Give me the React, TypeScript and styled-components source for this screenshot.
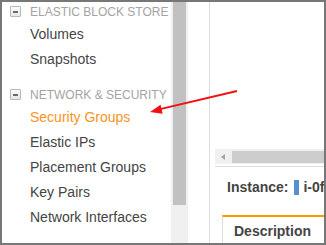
import React from 'react';
import styled, {createGlobalStyle} from 'styled-components';

const GlobalStyle = createGlobalStyle`
	html, body {
		margin: 0;
		padding: 0;
		background: #ffffff;
	}
	body {
		font-family: 'Liberation Sans', Arial, sans-serif;
	}
`;

const data = {
	sections: [
		{title: 'ELASTIC BLOCK STORE', items: ['Volumes', 'Snapshots']},
		{
			title: 'NETWORK & SECURITY',
			items: [
				'Security Groups',
				'Elastic IPs',
				'Placement Groups',
				'Key Pairs',
				'Network Interfaces',
			],
		},
	],
	active: 'Security Groups',
};

function MinusBox() {
	return (
		<_Minus>
			<span />
		</_Minus>
	);
}

function Arrow() {
	return (
		<_ArrowSvg width="326" height="245" viewBox="0 0 326 245">
			<line x1="237" y1="91" x2="158" y2="109.6" stroke="#f21010" strokeWidth="2" />
			<polygon points="150,112 162.6,113.8 160.6,104.8" fill="#f21010" />
		</_ArrowSvg>
	);
}

export default function App() {
	return (
		<>
			<GlobalStyle />
			<Frame>
				<Sidebar>
					{data.sections.map((s, i) => (
						<Section key={i} first={i === 0}>
							<Header>
								<MinusBox />
								<span>{s.title}</span>
							</Header>
							{s.items.map((item) => (
								<Item key={item} active={item === data.active}>
									{item}
								</Item>
							))}
						</Section>
					))}
				</Sidebar>
				<VTrack>
					<VThumb />
				</VTrack>
				<Gutter />
				<Content>
					<TableArea />
					<HScroll>
						<LeftArrow />
						<HThumb />
					</HScroll>
					<Divider />
					<InstanceRow>
						<Label>Instance:</Label>
						<StateMark />
						<InstanceId>i-0f3a9c27b81d4e562</InstanceId>
					</InstanceRow>
					<Tab>
						<TabTitle>Description</TabTitle>
					</Tab>
				</Content>
				<Arrow />
			</Frame>
		</>
	);
}

const Frame = styled.div`
	position: relative;
	display: flex;
	width: 326px;
	height: 245px;
	box-sizing: border-box;
	border: 2px solid #777777;
	overflow: hidden;
	background: #ffffff;
`;

const Sidebar = styled.div`
	width: 169px;
	flex-shrink: 0;
	display: flex;
	flex-direction: column;
`;

const Section = styled.div<{first: boolean}>`
	display: flex;
	flex-direction: column;
	margin-top: ${(p) => (p.first ? '0' : '13px')};
`;

const Header = styled.div`
	display: flex;
	align-items: center;
	gap: 9px;
	padding-left: 8px;
	height: 20px;
	line-height: 19px;
	font-size: 12px;
	color: #a3a3a3;
	white-space: nowrap;
`;

const _Minus = styled.div`
	width: 11px;
	height: 11px;
	box-sizing: border-box;
	border: 1px solid #b8b8b8;
	border-radius: 1px;
	background: linear-gradient(#fbfbfb, #e6e6e6);
	display: flex;
	align-items: center;
	justify-content: center;
	margin-bottom: 1px;

	span {
		width: 5px;
		height: 2px;
		background: #6a6a6a;
	}
`;

const Item = styled.div<{active: boolean}>`
	padding-left: 28px;
	height: 25px;
	line-height: 25px;
	font-size: 14px;
	color: ${(p) => (p.active ? '#f7941e' : '#444444')};
	white-space: nowrap;
`;

const VTrack = styled.div`
	width: 17px;
	flex-shrink: 0;
	background: #f0f0f0;
	padding-left: 2px;
	box-sizing: border-box;
`;

const VThumb = styled.div`
	width: 13px;
	height: 203px;
	background: #c1c1c1;
`;

const Gutter = styled.div`
	width: 21px;
	flex-shrink: 0;
`;

const Content = styled.div`
	flex: 1;
	min-width: 0;
	border-left: 1px solid #dddddd;
	display: flex;
	flex-direction: column;
`;

const TableArea = styled.div`
	height: 147px;
	flex-shrink: 0;
`;

const HScroll = styled.div`
	margin-left: 5px;
	height: 15px;
	flex-shrink: 0;
	background: #f0f0f0;
	display: flex;
	align-items: center;
`;

const LeftArrow = styled.div`
	width: 0;
	height: 0;
	margin-left: 6px;
	border-top: 3px solid transparent;
	border-bottom: 3px solid transparent;
	border-right: 4px solid #a3a3a3;
`;

const HThumb = styled.div`
	flex: 1;
	height: 12px;
	margin-left: 7px;
	background: #cdcdcd;
`;

const Divider = styled.div`
	margin: 2px 0 0 5px;
	height: 1px;
	background: #dddddd;
	flex-shrink: 0;
`;

const InstanceRow = styled.div`
	display: flex;
	align-items: center;
	padding: 10px 0 0 17px;
	height: 20px;
	flex-shrink: 0;
	white-space: nowrap;
`;

const Label = styled.span`
	font-size: 14px;
	font-weight: bold;
	line-height: 20px;
	color: #444444;
`;

const StateMark = styled.span`
	width: 5px;
	height: 15px;
	margin-left: 6px;
	background: #5a8fcf;
	flex-shrink: 0;
`;

const InstanceId = styled.span`
	margin-left: 4px;
	font-size: 14px;
	font-weight: bold;
	line-height: 20px;
	color: #444444;
`;

const Tab = styled.div`
	margin: 18px -40px 0 12px;
	border-top: 2px solid #ff9900;
	border-left: 1px solid #dddddd;
	padding: 4px 0 0 11px;
	flex: 1;
`;

const TabTitle = styled.div`
	font-size: 14px;
	font-weight: bold;
	line-height: 20px;
	color: #444444;
	white-space: nowrap;
`;

const _ArrowSvg = styled.svg`
	position: absolute;
	left: -2px;
	top: -2px;
	pointer-events: none;
`;
